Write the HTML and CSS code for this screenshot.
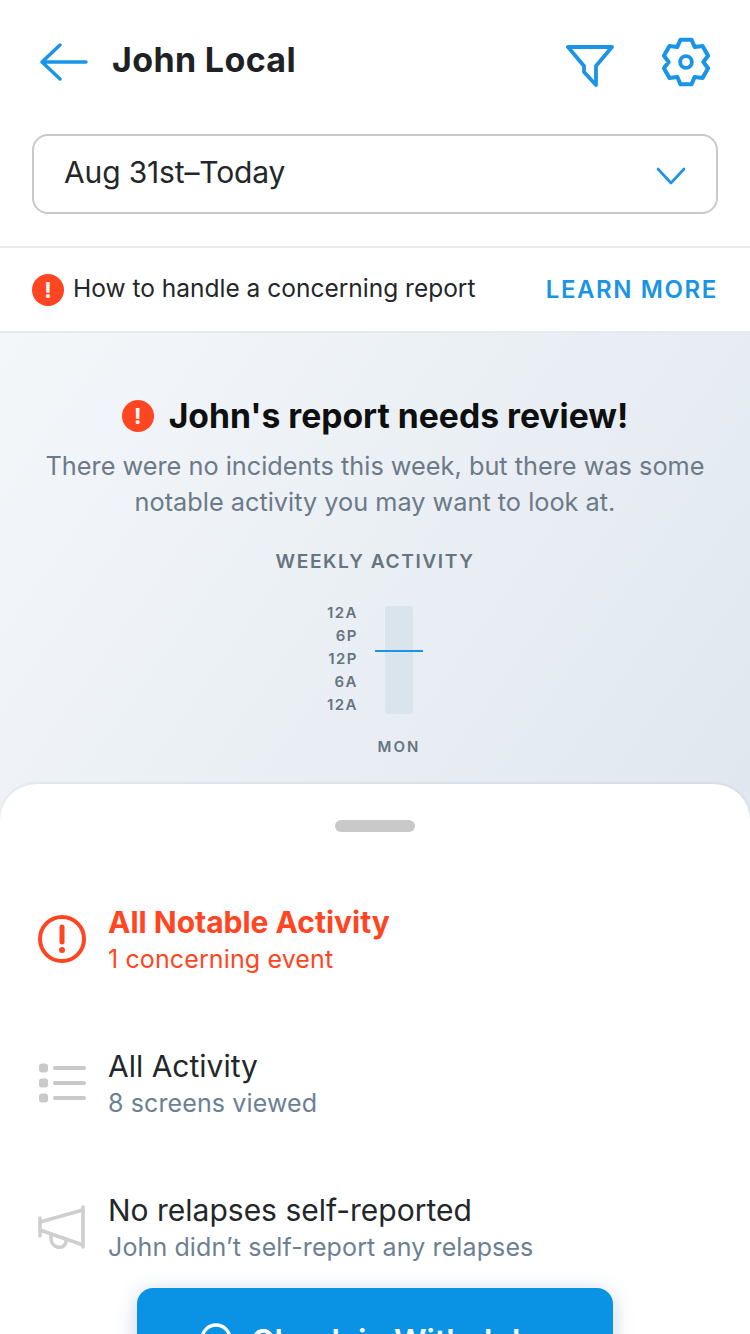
FILE: index.html
```html
<!DOCTYPE html>
<html lang="en">
<head>
<meta charset="utf-8">
<title>John Local</title>
<link rel="stylesheet" href="styles.css">
</head>
<body>
<div class="screen">
  <header class="topbar">
    <svg class="back" width="50" height="38" viewBox="0 0 50 38"><path d="M21 2 L3 19 L21 36 M3 19 H47" fill="none" stroke="#1a94e6" stroke-width="3.4" stroke-linecap="round" stroke-linejoin="round"/></svg>
    <h1 class="name">John Local</h1>
    <svg class="filter" width="48" height="44" viewBox="0 0 48 44"><path d="M2 3 H46 L30 22 V41 L18 28 V22 Z" fill="none" stroke="#1a94e6" stroke-width="3.8" stroke-linejoin="round"/></svg>
    <svg class="gear" width="52" height="52" viewBox="0 0 24 24"><path d="M9.44 1.71 H14.56 L16 5.07 L19.63 4.64 L22.19 9.08 L20 12 L22.19 14.92 L19.63 19.36 L16 18.93 L14.56 22.29 H9.44 L8 18.93 L4.37 19.36 L1.81 14.92 L4 12 L1.81 9.08 L4.37 4.64 L8 5.07 Z" fill="none" stroke="#1a94e6" stroke-width="1.9" stroke-linejoin="round"/><circle cx="12" cy="12" r="2.7" fill="none" stroke="#1a94e6" stroke-width="1.8"/></svg>
  </header>
  <div class="range-wrap">
    <div class="range">
      <span class="range-text">Aug 31st–Today</span>
      <svg width="30" height="18" viewBox="0 0 30 18"><path d="M2 2 L15 16 L28 2" fill="none" stroke="#1a94e6" stroke-width="2.6" stroke-linecap="round" stroke-linejoin="round"/></svg>
    </div>
  </div>
  <div class="banner">
    <span class="alert small">!</span>
    <span class="banner-text">How to handle a concerning report</span>
    <span class="learn">LEARN MORE</span>
  </div>
  <section class="hero">
    <h2 class="hero-title"><span class="alert small">!</span>John's report needs review!</h2>
    <p class="hero-sub">There were no incidents this week, but there was some notable activity you may want to look at.</p>
    <div class="weekly">WEEKLY ACTIVITY</div>
    <div class="chart">
      <div class="hours"><span>12A</span><span>6P</span><span>12P</span><span>6A</span><span>12A</span></div>
      <div class="column"><div class="bar"><i class="mark"></i></div><div class="day">MON</div></div>
    </div>
  </section>
  <section class="sheet">
    <div class="handle"></div>
    <div class="row notable">
      <svg class="row-icon" width="50" height="50" viewBox="0 0 50 50"><circle cx="24" cy="25" r="22" fill="none" stroke="#ff4522" stroke-width="4"/><path d="M24 13 V28" stroke="#ff4522" stroke-width="5" stroke-linecap="round"/><circle cx="24" cy="36" r="3" fill="#ff4522"/></svg>
      <div class="row-text"><div class="row-title">All Notable Activity</div><div class="row-sub">1 concerning event</div></div>
    </div>
    <div class="row">
      <svg class="row-icon" width="50" height="50" viewBox="0 0 50 50"><g fill="#c9c9c9"><rect x="1" y="5.500" width="9" height="9" rx="3"/><rect x="1" y="20.500" width="9" height="9" rx="3"/><rect x="1" y="35.500" width="9" height="9" rx="3"/><rect x="15" y="8" width="33" height="4" rx="2"/><rect x="15" y="23" width="33" height="4" rx="2"/><rect x="15" y="38" width="33" height="4" rx="2"/></g></svg>
      <div class="row-text"><div class="row-title">All Activity</div><div class="row-sub">8 screens viewed</div></div>
    </div>
    <div class="row">
      <svg class="row-icon" width="50" height="50" viewBox="0 0 50 50"><g fill="none" stroke="#cfcfcf" stroke-width="3.6" stroke-linecap="round" stroke-linejoin="round"><path d="M45 5 V45 M45 8 L2 20 M45 43 L2 28"/><path d="M2 16 V34"/><path d="M13 34 C12 48 28 48 28 39"/></g></svg>
      <div class="row-text"><div class="row-title">No relapses self-reported</div><div class="row-sub">John didn’t self-report any relapses</div></div>
    </div>
    <button class="cta"><svg width="34" height="34" viewBox="0 0 34 34"><circle cx="17" cy="17" r="14" fill="none" stroke="#fff" stroke-width="3.4"/></svg><span>Check in With John</span></button>
  </section>
</div>
</body>
</html>
```
FILE: styles.css
```css
* { box-sizing: border-box; }
html, body { margin: 0; padding: 0; }
body { font-family: Inter, "Noto Sans", sans-serif; background: #fff; color: #1f2224; }
.screen { width: 750px; height: 1334px; overflow: hidden; position: relative; display: flex; flex-direction: column; }
.topbar { height: 134px; display: flex; align-items: flex-start; padding: 36px 38px 0 39px; flex: none; }
.back { margin-top: 7px; }
.name { font-size: 34px; line-height: 48px; font-weight: 700; margin: 0 0 0 23px; flex: 1; letter-spacing: .35px; }
.filter { margin: 8px 46px 0 0; }
.gear { margin-top: 0; }
.range-wrap { padding: 0 32px; height: 114px; border-bottom: 2px solid #e8eaec; flex: none; }
.range { height: 80px; border: 2px solid #c9c9c9; border-radius: 16px; display: flex; align-items: center; justify-content: space-between; padding: 0 30px 0 30px; font-size: 30px; letter-spacing: -.15px; color: #23272a; }
.range-text { margin-top: -4px; }
.range svg { margin-top: 4px; }
.banner { height: 85px; display: flex; align-items: center; padding: 0 32px; flex: none; border-bottom: 2px solid #e6eaee; }
.alert { display: inline-flex; align-items: center; justify-content: center; border-radius: 50%; background: #ff4522; color: #fff; font-weight: 700; }
.alert.small { width: 32px; height: 32px; font-size: 22px; flex: none; }
.banner-text { font-size: 24.5px; margin-left: 9px; margin-top: -4px; flex: 1; color: #23272a; }
.learn { font-size: 24px; font-weight: 600; letter-spacing: 1.6px; color: #1a94e6; }
.hero { height: 491px; flex: none; background: linear-gradient(125deg, #f4f7fa 0%, #ebf0f5 45%, #e0e7ef 100%); display: flex; flex-direction: column; align-items: center; padding-top: 62px; }
.hero-title { margin: 0; font-size: 33.7px; line-height: 42px; font-weight: 700; color: #0d0f10; display: flex; align-items: center; gap: 15px; }
.hero-sub { margin: 11px 0 0; width: 690px; text-align: center; font-size: 25.3px; line-height: 36px; color: #6c7a88; }
.weekly { margin-top: 29px; font-size: 19.2px; line-height: 24px; font-weight: 600; letter-spacing: 1.55px; color: #66747f; }
.chart { margin-top: 33px; display: flex; width: 100px; margin-left: -50px; }
.hours { width: 58px; display: flex; flex-direction: column; align-items: flex-end; margin-top: -5px; flex: none; }
.hours span { font-size: 15px; line-height: 23px; font-weight: 600; letter-spacing: 1.5px; color: #66747f; }
.column { display: flex; flex-direction: column; align-items: center; flex: none; width: 82px; }
.bar { width: 28px; height: 108px; border-radius: 3px; background: #dae4ed; position: relative; }
.mark { position: absolute; left: -10px; top: 44px; width: 48px; height: 2px; background: #1a94e6; }
.day { margin-top: 23px; font-size: 15px; line-height: 20px; font-weight: 600; letter-spacing: 2px; color: #66747f; }
.sheet { flex: 1; background: #fff; border-radius: 36px 36px 0 0; margin-top: -40px; position: relative; padding: 36px 0 0 38px; box-shadow: 0 -1px 3px rgba(80,100,120,.12); }
.handle { width: 80px; height: 12px; border-radius: 6px; background: #c9c9c9; margin: 0 0 0 297px; }
.row { display: flex; align-items: center; height: 74px; margin-top: 70px; }
.handle + .row { margin-top: 72px; }
.row-icon { flex: none; margin-top: -4px; }
.row-text { margin-left: 20px; }
.row-title { font-size: 30px; line-height: 36px; color: #23272a; }
.row-sub { font-size: 25px; line-height: 38px; color: #6c7f93; letter-spacing: .12px; }
.notable .row-title { font-weight: 700; color: #ff4522; }
.notable .row-sub { color: #ff4522; }
.cta { position: absolute; left: 137px; top: 504px; width: 476px; height: 110px; border: 0; border-radius: 16px; background: #0a92e4; color: #fff; font: 600 32px Inter, sans-serif; display: flex; align-items: flex-start; justify-content: center; gap: 18px; padding-top: 34px; box-shadow: 0 4px 20px rgba(60,110,160,.3); }
```
